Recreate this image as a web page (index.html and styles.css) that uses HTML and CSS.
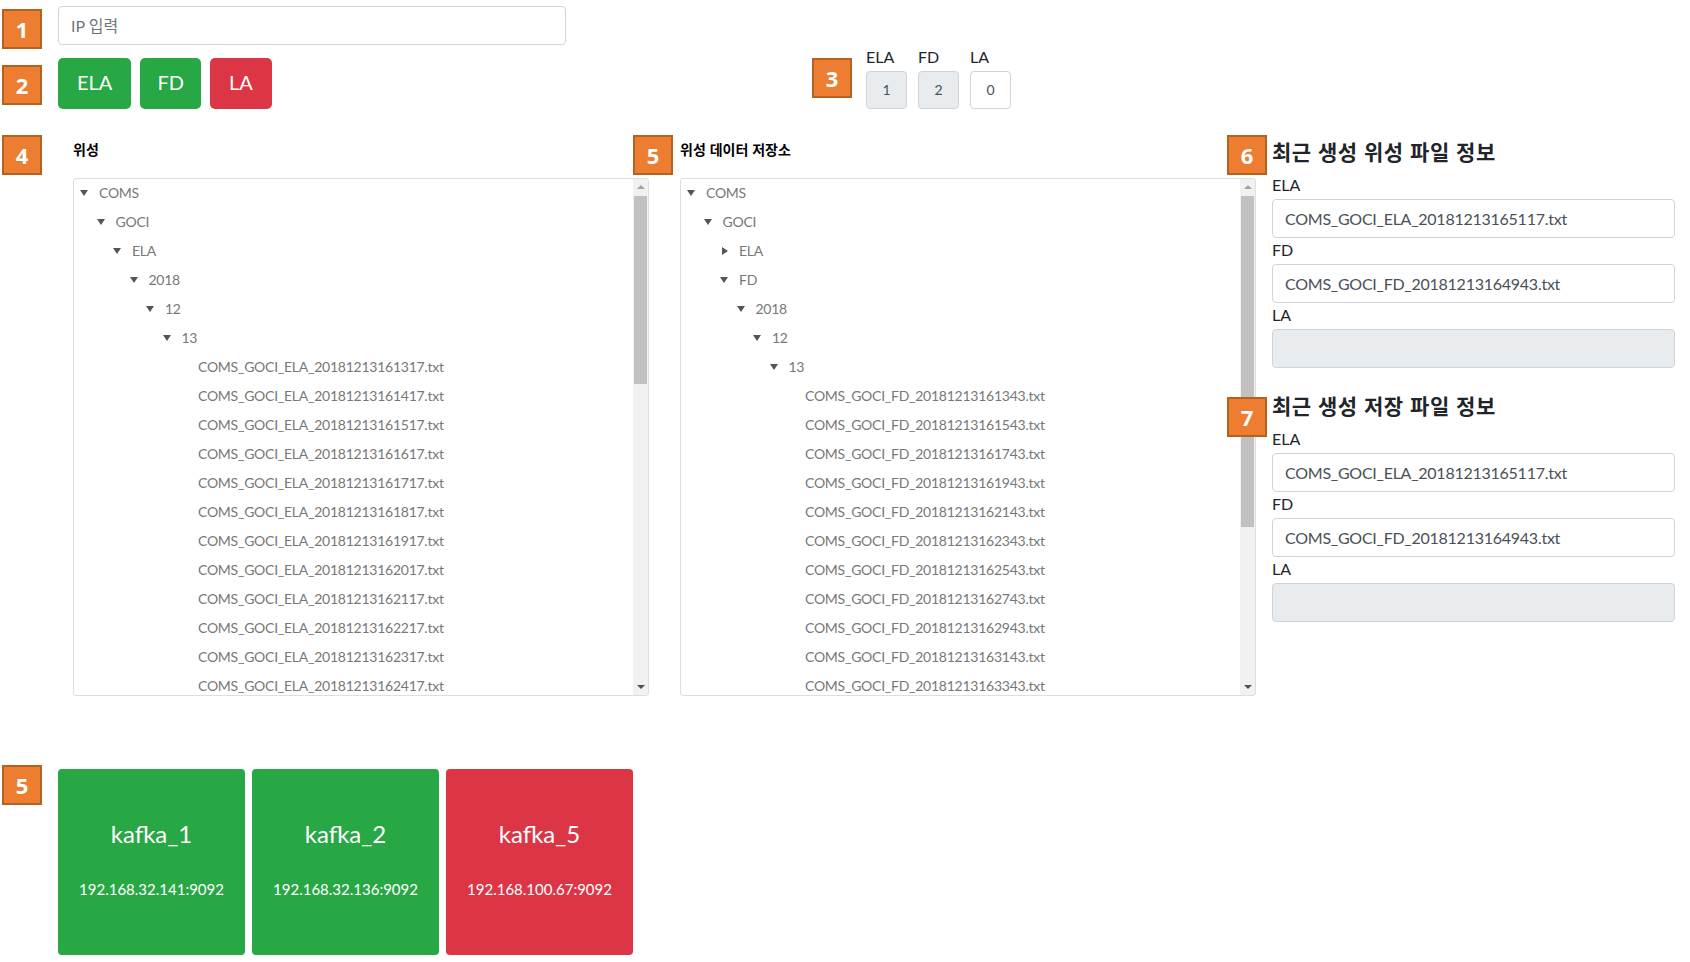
FILE: index.html
```html
<!DOCTYPE html>
<html lang="ko">
<head>
<meta charset="utf-8">
<title>위성 파일 모니터</title>
<link rel="stylesheet" href="styles.css">
</head>
<body>
<div class="page">
  <section class="row-ip">
    <span class="badge badge-1">1</span>
    <input class="ip-input" type="text" placeholder="IP 입력">
  </section>

  <section class="row-mode">
    <span class="badge badge-2">2</span>
    <div class="mode-buttons">
      <button class="btn btn-green">ELA</button>
      <button class="btn btn-green btn-narrow">FD</button>
      <button class="btn btn-red">LA</button>
    </div>
    <div class="counts">
      <span class="badge badge-inline">3</span>
      <div class="count-col"><div class="count-label">ELA</div><div class="count-box filled">1</div></div>
      <div class="count-col"><div class="count-label">FD</div><div class="count-box filled">2</div></div>
      <div class="count-col"><div class="count-label">LA</div><div class="count-box">0</div></div>
    </div>
  </section>

  <section class="row-main">
    <span class="badge badge-4">4</span>
    <div class="tree-panel tree-panel-sat">
      <h2 class="panel-title">위성</h2>
      <div class="tree-box">
        <div class="tree-view">
          <div class="tree-row lv0"><span class="tw"><i class="caret-down"></i></span>COMS</div>
          <div class="tree-row lv1"><span class="tw"><i class="caret-down"></i></span>GOCI</div>
          <div class="tree-row lv2"><span class="tw"><i class="caret-down"></i></span>ELA</div>
          <div class="tree-row lv3"><span class="tw"><i class="caret-down"></i></span>2018</div>
          <div class="tree-row lv4"><span class="tw"><i class="caret-down"></i></span>12</div>
          <div class="tree-row lv5"><span class="tw"><i class="caret-down"></i></span>13</div>
          <div class="tree-row lv6"><span class="tw"></span>COMS_GOCI_ELA_20181213161317.txt</div>
          <div class="tree-row lv6"><span class="tw"></span>COMS_GOCI_ELA_20181213161417.txt</div>
          <div class="tree-row lv6"><span class="tw"></span>COMS_GOCI_ELA_20181213161517.txt</div>
          <div class="tree-row lv6"><span class="tw"></span>COMS_GOCI_ELA_20181213161617.txt</div>
          <div class="tree-row lv6"><span class="tw"></span>COMS_GOCI_ELA_20181213161717.txt</div>
          <div class="tree-row lv6"><span class="tw"></span>COMS_GOCI_ELA_20181213161817.txt</div>
          <div class="tree-row lv6"><span class="tw"></span>COMS_GOCI_ELA_20181213161917.txt</div>
          <div class="tree-row lv6"><span class="tw"></span>COMS_GOCI_ELA_20181213162017.txt</div>
          <div class="tree-row lv6"><span class="tw"></span>COMS_GOCI_ELA_20181213162117.txt</div>
          <div class="tree-row lv6"><span class="tw"></span>COMS_GOCI_ELA_20181213162217.txt</div>
          <div class="tree-row lv6"><span class="tw"></span>COMS_GOCI_ELA_20181213162317.txt</div>
          <div class="tree-row lv6"><span class="tw"></span>COMS_GOCI_ELA_20181213162417.txt</div>
        </div>
        <div class="scrollbar">
          <div class="sb-btn"><i class="sb-up"></i></div>
          <div class="sb-track"><div class="sb-thumb thumb-sat"></div></div>
          <div class="sb-btn"><i class="sb-down"></i></div>
        </div>
      </div>
    </div>

    <div class="tree-panel tree-panel-store">
      <span class="badge badge-5">5</span>
      <h2 class="panel-title">위성 데이터 저장소</h2>
      <div class="tree-box">
        <div class="tree-view">
          <div class="tree-row lv0"><span class="tw"><i class="caret-down"></i></span>COMS</div>
          <div class="tree-row lv1"><span class="tw"><i class="caret-down"></i></span>GOCI</div>
          <div class="tree-row lv2"><span class="tw"><i class="caret-right"></i></span>ELA</div>
          <div class="tree-row lv2"><span class="tw"><i class="caret-down"></i></span>FD</div>
          <div class="tree-row lv3"><span class="tw"><i class="caret-down"></i></span>2018</div>
          <div class="tree-row lv4"><span class="tw"><i class="caret-down"></i></span>12</div>
          <div class="tree-row lv5"><span class="tw"><i class="caret-down"></i></span>13</div>
          <div class="tree-row lv6"><span class="tw"></span>COMS_GOCI_FD_20181213161343.txt</div>
          <div class="tree-row lv6"><span class="tw"></span>COMS_GOCI_FD_20181213161543.txt</div>
          <div class="tree-row lv6"><span class="tw"></span>COMS_GOCI_FD_20181213161743.txt</div>
          <div class="tree-row lv6"><span class="tw"></span>COMS_GOCI_FD_20181213161943.txt</div>
          <div class="tree-row lv6"><span class="tw"></span>COMS_GOCI_FD_20181213162143.txt</div>
          <div class="tree-row lv6"><span class="tw"></span>COMS_GOCI_FD_20181213162343.txt</div>
          <div class="tree-row lv6"><span class="tw"></span>COMS_GOCI_FD_20181213162543.txt</div>
          <div class="tree-row lv6"><span class="tw"></span>COMS_GOCI_FD_20181213162743.txt</div>
          <div class="tree-row lv6"><span class="tw"></span>COMS_GOCI_FD_20181213162943.txt</div>
          <div class="tree-row lv6"><span class="tw"></span>COMS_GOCI_FD_20181213163143.txt</div>
          <div class="tree-row lv6"><span class="tw"></span>COMS_GOCI_FD_20181213163343.txt</div>
        </div>
        <div class="scrollbar">
          <div class="sb-btn"><i class="sb-up"></i></div>
          <div class="sb-track"><div class="sb-thumb thumb-store"></div></div>
          <div class="sb-btn"><i class="sb-down"></i></div>
        </div>
      </div>
    </div>

    <div class="info-panel">
      <div class="info-group">
        <span class="badge badge-6">6</span>
        <h3 class="info-title">최근 생성 위성 파일 정보</h3>
        <div class="field-label">ELA</div>
        <input class="field-input" type="text" value="COMS_GOCI_ELA_20181213165117.txt" readonly>
        <div class="field-label">FD</div>
        <input class="field-input" type="text" value="COMS_GOCI_FD_20181213164943.txt" readonly>
        <div class="field-label">LA</div>
        <input class="field-input is-disabled" type="text" value="" disabled>
      </div>
      <div class="info-group">
        <span class="badge badge-7">7</span>
        <h3 class="info-title">최근 생성 저장 파일 정보</h3>
        <div class="field-label">ELA</div>
        <input class="field-input" type="text" value="COMS_GOCI_ELA_20181213165117.txt" readonly>
        <div class="field-label">FD</div>
        <input class="field-input" type="text" value="COMS_GOCI_FD_20181213164943.txt" readonly>
        <div class="field-label">LA</div>
        <input class="field-input is-disabled" type="text" value="" disabled>
      </div>
    </div>
  </section>

  <section class="row-kafka">
    <span class="badge badge-k">5</span>
    <div class="kafka-card ok"><div class="kafka-name">kafka_1</div><div class="kafka-ip">192.168.32.141:9092</div></div>
    <div class="kafka-card ok"><div class="kafka-name">kafka_2</div><div class="kafka-ip">192.168.32.136:9092</div></div>
    <div class="kafka-card down"><div class="kafka-name">kafka_5</div><div class="kafka-ip">192.168.100.67:9092</div></div>
  </section>
</div>
</body>
</html>
```

FILE: styles.css
```css
* { box-sizing: border-box; }

body {
  margin: 0;
  background: #fff;
  color: #212529;
  font-family: Lato, "Noto Sans CJK KR", sans-serif;
}

.page {
  padding: 6px 0 0 58px;
}

section { position: relative; }

/* annotation badges */
.badge {
  position: absolute;
  width: 40px;
  height: 40px;
  background: #ed7d31;
  border: 2px solid #b5621f;
  color: #fff;
  font: 700 22px/36px "Open Sans", "Liberation Sans", sans-serif;
  text-align: center;
}
.badge-1 { left: -56px; top: 3px; }
.badge-2 { left: -56px; top: 20px; }
.badge-4 { left: -56px; top: 0; }
.badge-5 { left: -47px; top: 0; }
.badge-6 { left: -45px; top: -1px; }
.badge-7 { left: -45px; top: 7px; }
.badge-k { left: -56px; top: -4px; }
.badge-inline {
  position: static;
  flex: none;
  margin: 0 14px 11px 0;
}

/* row 1 */
.row-ip { height: 39px; }
.ip-input {
  display: block;
  width: 508px;
  height: 39px;
  border: 1px solid #ced4da;
  border-radius: 4px;
  padding: 0 12px;
  font: 16px Lato, "Noto Sans CJK KR", sans-serif;
  color: #495057;
  background: #fff;
}
.ip-input::placeholder { color: #6c757d; }

/* row 2 */
.row-mode {
  display: flex;
  align-items: flex-end;
  height: 64px;
}
.mode-buttons {
  display: flex;
  gap: 9px;
  width: 754px;
}
.btn {
  height: 51px;
  padding: 0 19px 3px;
  border: 0;
  border-radius: 5px;
  font: 20px Lato, sans-serif;
  color: #fff;
}
.btn-narrow { padding: 0 17px 3px; }
.btn-green { background: #28a745; }
.btn-red { background: #dc3545; }

.counts {
  display: flex;
  align-items: flex-end;
}
.count-col {
  width: 41px;
  margin-right: 11px;
}
.count-label {
  font-size: 16px;
  line-height: 24px;
  color: #212529;
}
.count-box {
  margin-top: 2px;
  height: 38px;
  border: 1px solid #ced4da;
  border-radius: 4px;
  background: #fff;
  color: #495057;
  font-size: 14px;
  line-height: 36px;
  text-align: center;
}
.count-box.filled { background: #e9ecef; }

/* row 3 */
.row-main {
  display: flex;
  margin-top: 26px;
}
.tree-panel {
  position: relative;
  width: 576px;
  flex: none;
}
.tree-panel-sat { margin-left: 15px; }
.tree-panel-store { margin-left: 31px; }

.panel-title {
  margin: 0 0 14px;
  font: 700 14px/29px "Noto Sans CJK KR", sans-serif;
  color: #000;
}

.tree-box {
  display: flex;
  height: 518px;
  margin-top: 1px;
  border: 1px solid #dedede;
  border-radius: 3px;
  overflow: hidden;
  background: #fff;
}
.tree-view {
  flex: 1;
  overflow: hidden;
  padding-top: 0;
  margin-top: -1px;
}
.tree-row {
  display: flex;
  align-items: center;
  height: 29px;
  white-space: nowrap;
  font-size: 14px;
  letter-spacing: -0.25px;
  color: #777;
}
.lv0 { padding-left: 1px; }
.lv1 { padding-left: 17.5px; }
.lv2 { padding-left: 34px; }
.lv3 { padding-left: 50.5px; }
.lv4 { padding-left: 67px; }
.lv5 { padding-left: 83.5px; }
.lv6 { padding-left: 100px; }

.tw {
  flex: none;
  width: 24px;
  display: flex;
  align-items: center;
  padding-left: 5px;
}
.caret-down {
  display: block;
  width: 0;
  height: 0;
  border-left: 4px solid transparent;
  border-right: 4px solid transparent;
  border-top: 6px solid #555;
}
.caret-right {
  display: block;
  width: 0;
  height: 0;
  margin-left: 2px;
  border-top: 4px solid transparent;
  border-bottom: 4px solid transparent;
  border-left: 6px solid #555;
}

.scrollbar {
  flex: none;
  width: 15px;
  background: #f1f1f1;
  display: flex;
  flex-direction: column;
}
.sb-btn {
  height: 16px;
  flex: none;
  display: flex;
  align-items: center;
  justify-content: center;
}
.sb-up {
  display: block;
  width: 0;
  height: 0;
  border-left: 4px solid transparent;
  border-right: 4px solid transparent;
  border-bottom: 4px solid #a3a3a3;
}
.sb-down {
  display: block;
  width: 0;
  height: 0;
  border-left: 4px solid transparent;
  border-right: 4px solid transparent;
  border-top: 4px solid #505050;
}
.sb-track {
  flex: 1;
  padding: 1px 1px 0;
}
.sb-thumb { background: #c1c1c1; }
.thumb-sat { height: 188px; }
.thumb-store { height: 331px; }

/* info panel */
.info-panel {
  width: 403px;
  flex: none;
  margin-left: 16px;
  margin-top: 1px;
}
.info-group { position: relative; }
.info-group + .info-group { margin-top: 22px; }
.info-title {
  margin: 0 0 7px;
  font: 700 21px/30px "Noto Sans CJK KR", sans-serif;
  letter-spacing: 0.5px;
  color: #212529;
}
.field-label {
  font-size: 16px;
  line-height: 24px;
  color: #212529;
}
.field-input {
  display: block;
  width: 100%;
  height: 39px;
  margin-top: 2px;
  border: 1px solid #ced4da;
  border-radius: 4px;
  padding: 0 12px;
  font: 16px Lato, sans-serif;
  letter-spacing: -0.25px;
  color: #495057;
  background: #fff;
}
.field-input.is-disabled { background: #e9ecef; }

/* kafka */
.row-kafka {
  display: flex;
  gap: 7px;
  margin-top: 73px;
}
.kafka-card {
  width: 187px;
  height: 186px;
  border-radius: 4px;
  color: #fff;
  text-align: center;
  padding-top: 50px;
}
.kafka-card.ok { background: #28a745; }
.kafka-card.down { background: #dc3545; }
.kafka-name {
  font-size: 24px;
  line-height: 30px;
}
.kafka-ip {
  margin-top: 30px;
  font-size: 15px;
  line-height: 20px;
}
```
